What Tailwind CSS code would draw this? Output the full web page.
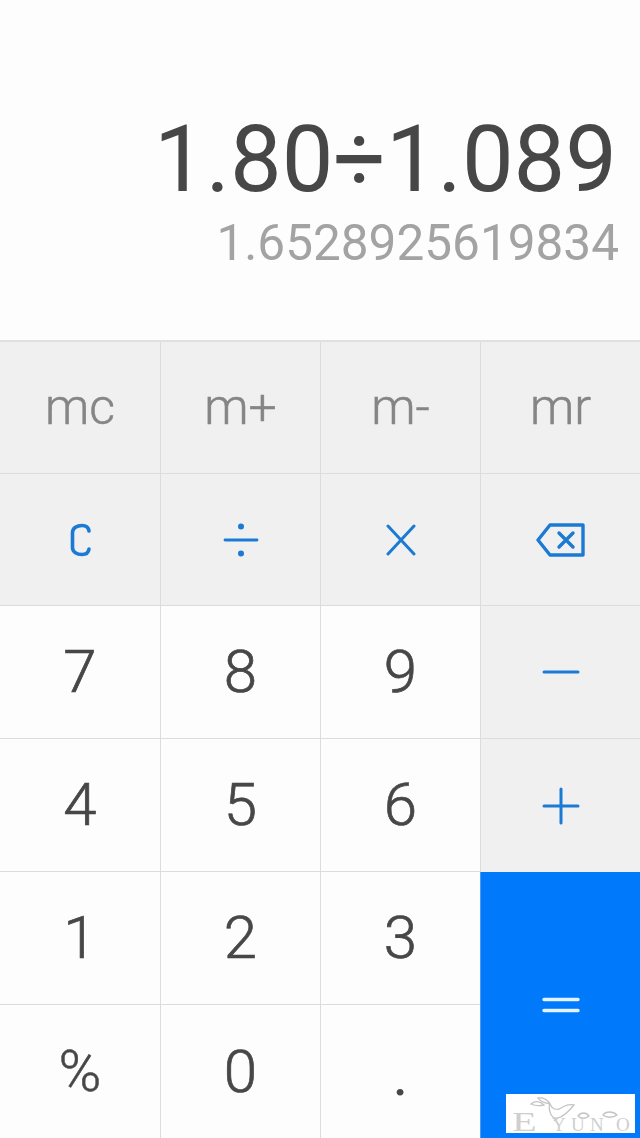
<!DOCTYPE html>
<html lang="en">
<head>
    <meta charset="UTF-8">
    <title>Calculator</title>
    <script src="https://cdn.jsdelivr.net/npm/@tailwindcss/browser@4"></script>
</head>
<body class="bg-[#fdfdfd]">
    <div class="relative w-[640px] h-[1138px] overflow-hidden flex flex-col font-['Roboto',sans-serif]">
        <!-- Display -->
        <div class="h-[341px] flex flex-col items-end pr-[23px] pt-[102px] bg-[#fdfdfd]">
            <div class="text-[92px] leading-[116px] text-[#474747] whitespace-nowrap">1.80÷1.089</div>
            <div class="text-[49.5px] leading-[54px] -mt-[2px] -mr-[2px] text-[#a3a3a3] whitespace-nowrap">1.6528925619834</div>
        </div>

        <!-- Keypad -->
        <div class="grid grid-cols-4 grid-rows-[132px_132px_133px_133px_133px_133px] border-t-2 border-[#e0e0e0] text-[#474747]">
            <button class="flex items-center justify-center bg-[#f0f0f0] border-b border-[#dcdcdc] text-[50px] font-light text-[#858585] [-webkit-text-stroke:0.5px_#858585]">mc</button>
            <button class="flex items-center justify-center bg-[#f0f0f0] border-l border-b border-[#dcdcdc] text-[50px] font-light text-[#858585] [-webkit-text-stroke:0.5px_#858585]">m+</button>
            <button class="flex items-center justify-center bg-[#f0f0f0] border-l border-b border-[#dcdcdc] text-[50px] font-light text-[#858585] [-webkit-text-stroke:0.5px_#858585]">m-</button>
            <button class="flex items-center justify-center bg-[#f0f0f0] border-l border-b border-[#dcdcdc] text-[50px] font-light text-[#858585] [-webkit-text-stroke:0.5px_#858585]">mr</button>

            <button class="flex items-center justify-center bg-[#f0f0f0] border-b border-[#dcdcdc]">
                <svg width="24" height="34" viewBox="0 0 24 34" fill="none" stroke="#1a7ad4" stroke-width="3.6" stroke-linecap="round"><path d="M21 8C20.5 4.5 18 2.5 14 2.5C9 2.5 4.5 5 4.5 9.5V24.5C4.5 29 9 31.5 14 31.5C18 31.5 20.5 29.5 21 26"/></svg>
            </button>
            <button class="flex items-center justify-center bg-[#f0f0f0] border-l border-b border-[#dcdcdc]">
                <svg width="36" height="34" viewBox="0 0 36 34" fill="none"><path d="M2 17H34" stroke="#1a7ad4" stroke-width="2.8" stroke-linecap="round"/><circle cx="18" cy="3.5" r="3" fill="#1a7ad4"/><circle cx="18" cy="30.5" r="3" fill="#1a7ad4"/></svg>
            </button>
            <button class="flex items-center justify-center bg-[#f0f0f0] border-l border-b border-[#dcdcdc]">
                <svg width="32" height="32" viewBox="0 0 32 32" fill="none" stroke="#1a7ad4" stroke-width="3" stroke-linecap="round"><path d="M3 2L29 30M29 2L3 30"/></svg>
            </button>
            <button class="flex items-center justify-center bg-[#f0f0f0] border-l border-b border-[#dcdcdc]">
                <svg width="50" height="34" viewBox="0 0 50 34" fill="none" stroke="#1a7ad4" stroke-width="3.4" stroke-linejoin="round" stroke-linecap="round"><path d="M14 2H47V32H14L2 17Z"/><path d="M23 10L37 24M37 10L23 24"/></svg>
            </button>

            <button class="flex items-center justify-center border-b border-[#dcdcdc] text-[60px] font-light [-webkit-text-stroke:0.7px_#474747]">7</button>
            <button class="flex items-center justify-center border-l border-b border-[#dcdcdc] text-[60px] font-light [-webkit-text-stroke:0.7px_#474747]">8</button>
            <button class="flex items-center justify-center border-l border-b border-[#dcdcdc] text-[60px] font-light [-webkit-text-stroke:0.7px_#474747]">9</button>
            <button class="flex items-center justify-center bg-[#f0f0f0] border-l border-b border-[#dcdcdc]">
                <svg width="38" height="4" viewBox="0 0 38 4"><path d="M2 2H36" stroke="#1a7ad4" stroke-width="3" stroke-linecap="round"/></svg>
            </button>

            <button class="flex items-center justify-center border-b border-[#dcdcdc] text-[60px] font-light [-webkit-text-stroke:0.7px_#474747]">4</button>
            <button class="flex items-center justify-center border-l border-b border-[#dcdcdc] text-[60px] font-light [-webkit-text-stroke:0.7px_#474747]">5</button>
            <button class="flex items-center justify-center border-l border-b border-[#dcdcdc] text-[60px] font-light [-webkit-text-stroke:0.7px_#474747]">6</button>
            <button class="flex items-center justify-center bg-[#f0f0f0] border-l border-[#dcdcdc] border-b-0">
                <svg width="38" height="38" viewBox="0 0 38 38" fill="none" stroke="#1a7ad4" stroke-width="3" stroke-linecap="round"><path d="M2 19H36M19 2V36"/></svg>
            </button>

            <button class="flex items-center justify-center border-b border-[#dcdcdc] text-[60px] font-light [-webkit-text-stroke:0.7px_#474747]">1</button>
            <button class="flex items-center justify-center border-l border-b border-[#dcdcdc] text-[60px] font-light [-webkit-text-stroke:0.7px_#474747]">2</button>
            <button class="flex items-center justify-center border-l border-b border-[#dcdcdc] text-[60px] font-light [-webkit-text-stroke:0.7px_#474747]">3</button>
            <button class="row-span-2 flex items-center justify-center bg-[#0079fb] border-l border-[#4a9cf0]">
                <svg width="38" height="16" viewBox="0 0 38 16" fill="none" stroke="#e4f4ff" stroke-width="3.4" stroke-linecap="round"><path d="M2 2.5H36M2 13.5H36"/></svg>
            </button>

            <button class="flex items-center justify-center text-[58px] font-light [-webkit-text-stroke:0.5px_#474747]">%</button>
            <button class="flex items-center justify-center border-l border-[#dcdcdc] text-[60px] font-light [-webkit-text-stroke:0.7px_#474747]">0</button>
            <button class="flex items-center justify-center border-l border-[#dcdcdc] text-[60px] pt-[6px]">.</button>
        </div>

        <!-- Watermark -->
        <div class="absolute left-[506px] top-[1094px] w-[129px] h-[39px] bg-white">
            <svg class="absolute left-[24px] top-[3px]" width="90" height="24" viewBox="0 0 90 24" fill="none" stroke="#c4c4c4" stroke-width="1.3"><path d="M1 7C6 3 11 5 14 8C10 9 5 9 1 7ZM8 1C13 0 18 3 20 7C15 6 10 5 8 1ZM20 7C22 12 27 14 31 11C36 8 40 7 44 8C40 13 35 19 28 21C24 22 21 19 20 15C19 12 19 9 20 7ZM28 21L24 24"/><path d="M48 19C51 15 56 15 59 19C56 22 51 22 48 19ZM73 18C76 14 83 14 87 18C83 21 76 21 73 18Z"/></svg>
            <div class="absolute left-[6px] bottom-[-3px] flex items-baseline font-['Liberation_Serif',serif] text-[#cfcfcf] leading-none">
                <span class="w-[40px] text-[27px] origin-left scale-x-150">E</span>
                <span class="w-[19px] text-[19px]">Y</span>
                <span class="w-[19px] text-[19px]">U</span>
                <span class="w-[26px] text-[19px]">N</span>
                <span class="text-[19px]">O</span>
            </div>
        </div>
    </div>
</body>
</html>
